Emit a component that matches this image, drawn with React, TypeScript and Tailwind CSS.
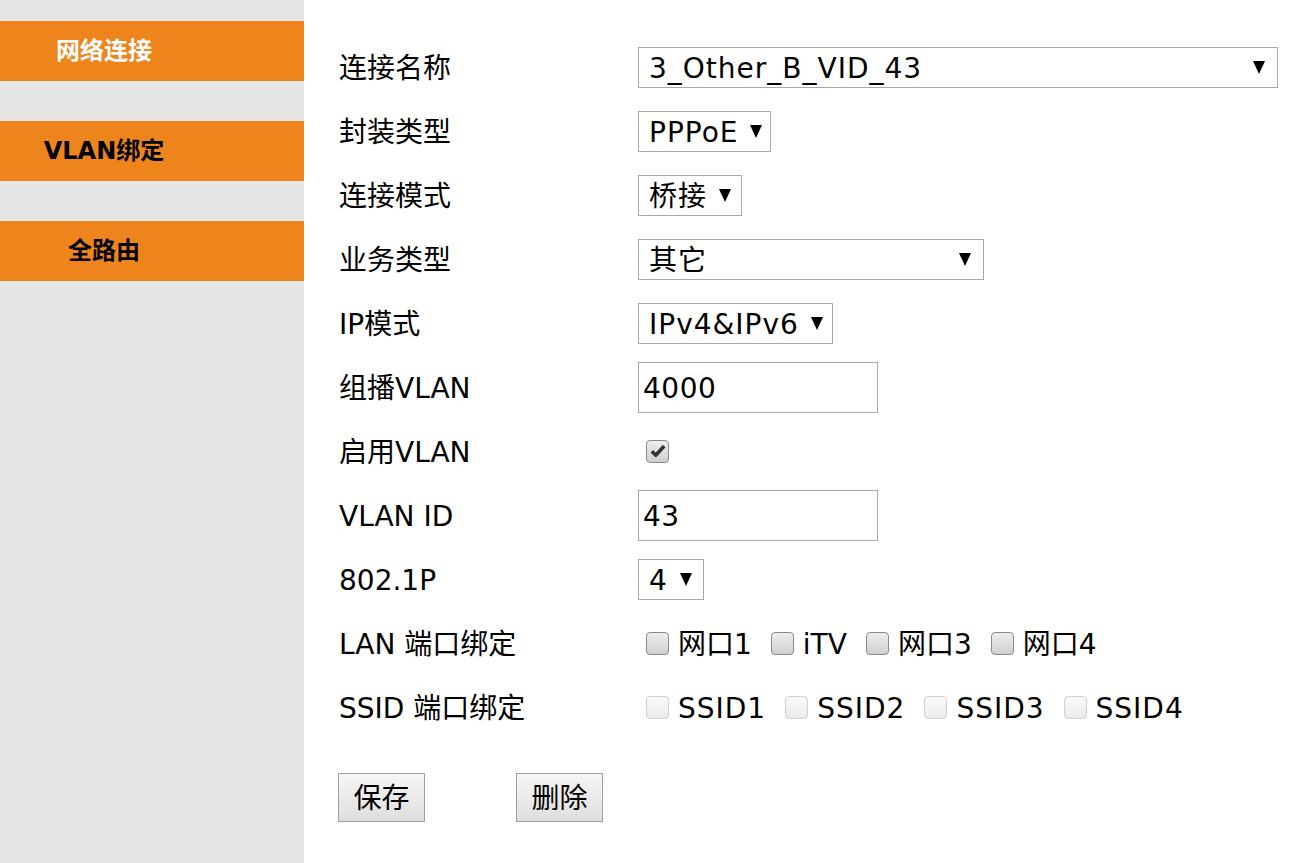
import React from 'react';

const FONT = '"DejaVu Sans", "Noto Sans CJK SC", sans-serif';

function Arrow() {
  return (
    <svg width="12" height="13" viewBox="0 0 12 13" className="shrink-0">
      <polygon points="0,0 12,0 6,13" fill="#000" />
    </svg>
  );
}

function FakeSelect({ value, width }: { value: string; width: string }) {
  return (
    <div className={`${width} h-[41px] border border-[#a9a9a9] bg-white flex items-center pl-[10px] pr-[12px] gap-[12px]`}>
      <span className="flex-1 whitespace-nowrap leading-none pt-[3px] tracking-[1px]">{value}</span>
      <Arrow />
    </div>
  );
}

function TextBox({ value }: { value: string }) {
  return (
    <div className="w-[240px] h-[51px] border border-[#a9a9a9] bg-white flex items-center pl-[4px] pt-[3px] leading-none tracking-[0.5px]">
      {value}
    </div>
  );
}

function Check({ checked, disabled }: { checked?: boolean; disabled?: boolean }) {
  const tone = disabled
    ? 'border-[#d0d0d0] bg-gradient-to-b from-[#fafafa] to-[#ebebeb]'
    : 'border-[#8a8a8a] bg-gradient-to-b from-[#eeeeee] to-[#cfcfcf]';
  return (
    <span className={`w-[23px] h-[23px] rounded-[4px] border ${tone} flex items-center justify-center shrink-0`}>
      {checked && (
        <svg width="16" height="14" viewBox="0 0 16 14">
          <path d="M1.8 7.2 L5.8 11.2 L14.2 2" stroke="#333" strokeWidth="3.6" fill="none" strokeLinejoin="round" />
        </svg>
      )}
    </span>
  );
}

function CheckItem({ label, disabled }: { label: string; disabled?: boolean }) {
  return (
    <div className="flex items-center gap-[9px]">
      <Check disabled={disabled} />
      <span className={`leading-none whitespace-nowrap pt-[3px] ${disabled ? 'tracking-[1px]' : ''}`}>{label}</span>
    </div>
  );
}

const navItems = [
  { label: '网络连接', active: true },
  { label: 'VLAN绑定', active: false },
  { label: '全路由', active: false },
];

export default function App() {
  const rows: { label: string; control: React.ReactNode }[] = [
    { label: '连接名称', control: <FakeSelect value="3_Other_B_VID_43" width="w-[640px]" /> },
    { label: '封装类型', control: <FakeSelect value="PPPoE" width="w-[133px]" /> },
    { label: '连接模式', control: <FakeSelect value="桥接" width="w-[104px]" /> },
    { label: '业务类型', control: <FakeSelect value="其它" width="w-[346px]" /> },
    { label: 'IP模式', control: <FakeSelect value="IPv4&IPv6" width="w-[195px]" /> },
    { label: '组播VLAN', control: <TextBox value="4000" /> },
    {
      label: '启用VLAN',
      control: (
        <div className="pl-[8px]">
          <Check checked />
        </div>
      ),
    },
    { label: 'VLAN ID', control: <TextBox value="43" /> },
    { label: '802.1P', control: <FakeSelect value="4" width="w-[66px]" /> },
    {
      label: 'LAN 端口绑定',
      control: (
        <div className="flex items-center gap-[19px] pl-[8px]">
          <CheckItem label="网口1" />
          <CheckItem label="iTV" />
          <CheckItem label="网口3" />
          <CheckItem label="网口4" />
        </div>
      ),
    },
    {
      label: 'SSID 端口绑定',
      control: (
        <div className="flex items-center gap-[19px] pl-[8px]">
          <CheckItem label="SSID1" disabled />
          <CheckItem label="SSID2" disabled />
          <CheckItem label="SSID3" disabled />
          <CheckItem label="SSID4" disabled />
        </div>
      ),
    },
  ];

  return (
    <div className="flex min-h-[863px] bg-white text-black" style={{ fontFamily: FONT }}>
      <aside className="w-[304px] shrink-0 bg-[#e6e6e6] pt-[21px] flex flex-col gap-[40px]">
        {navItems.map((item) => (
          <div
            key={item.label}
            className={`h-[60px] bg-[#ee841c] flex items-center justify-center pr-[96px] text-[24px] font-bold ${item.active ? 'text-white' : 'text-black'}`}
          >
            {item.label}
          </div>
        ))}
      </aside>

      <main className="flex-1 pl-[35px] pt-[35px] text-[28px]">
        <div className="flex flex-col">
          {rows.map((row) => (
            <div key={row.label} className="h-[64px] flex items-center">
              <div className="w-[299px] shrink-0 leading-none whitespace-nowrap pt-[3px]">{row.label}</div>
              {row.control}
            </div>
          ))}
        </div>
        <div className="flex gap-[91px] mt-[34px] -ml-[1px]">
          <button className="w-[87px] h-[49px] border border-[#a0a0a0] bg-gradient-to-b from-[#f6f6f6] to-[#dedede] leading-none pt-[2px]">
            保存
          </button>
          <button className="w-[87px] h-[49px] border border-[#a0a0a0] bg-gradient-to-b from-[#f6f6f6] to-[#dedede] leading-none pt-[2px]">
            删除
          </button>
        </div>
      </main>
    </div>
  );
}
